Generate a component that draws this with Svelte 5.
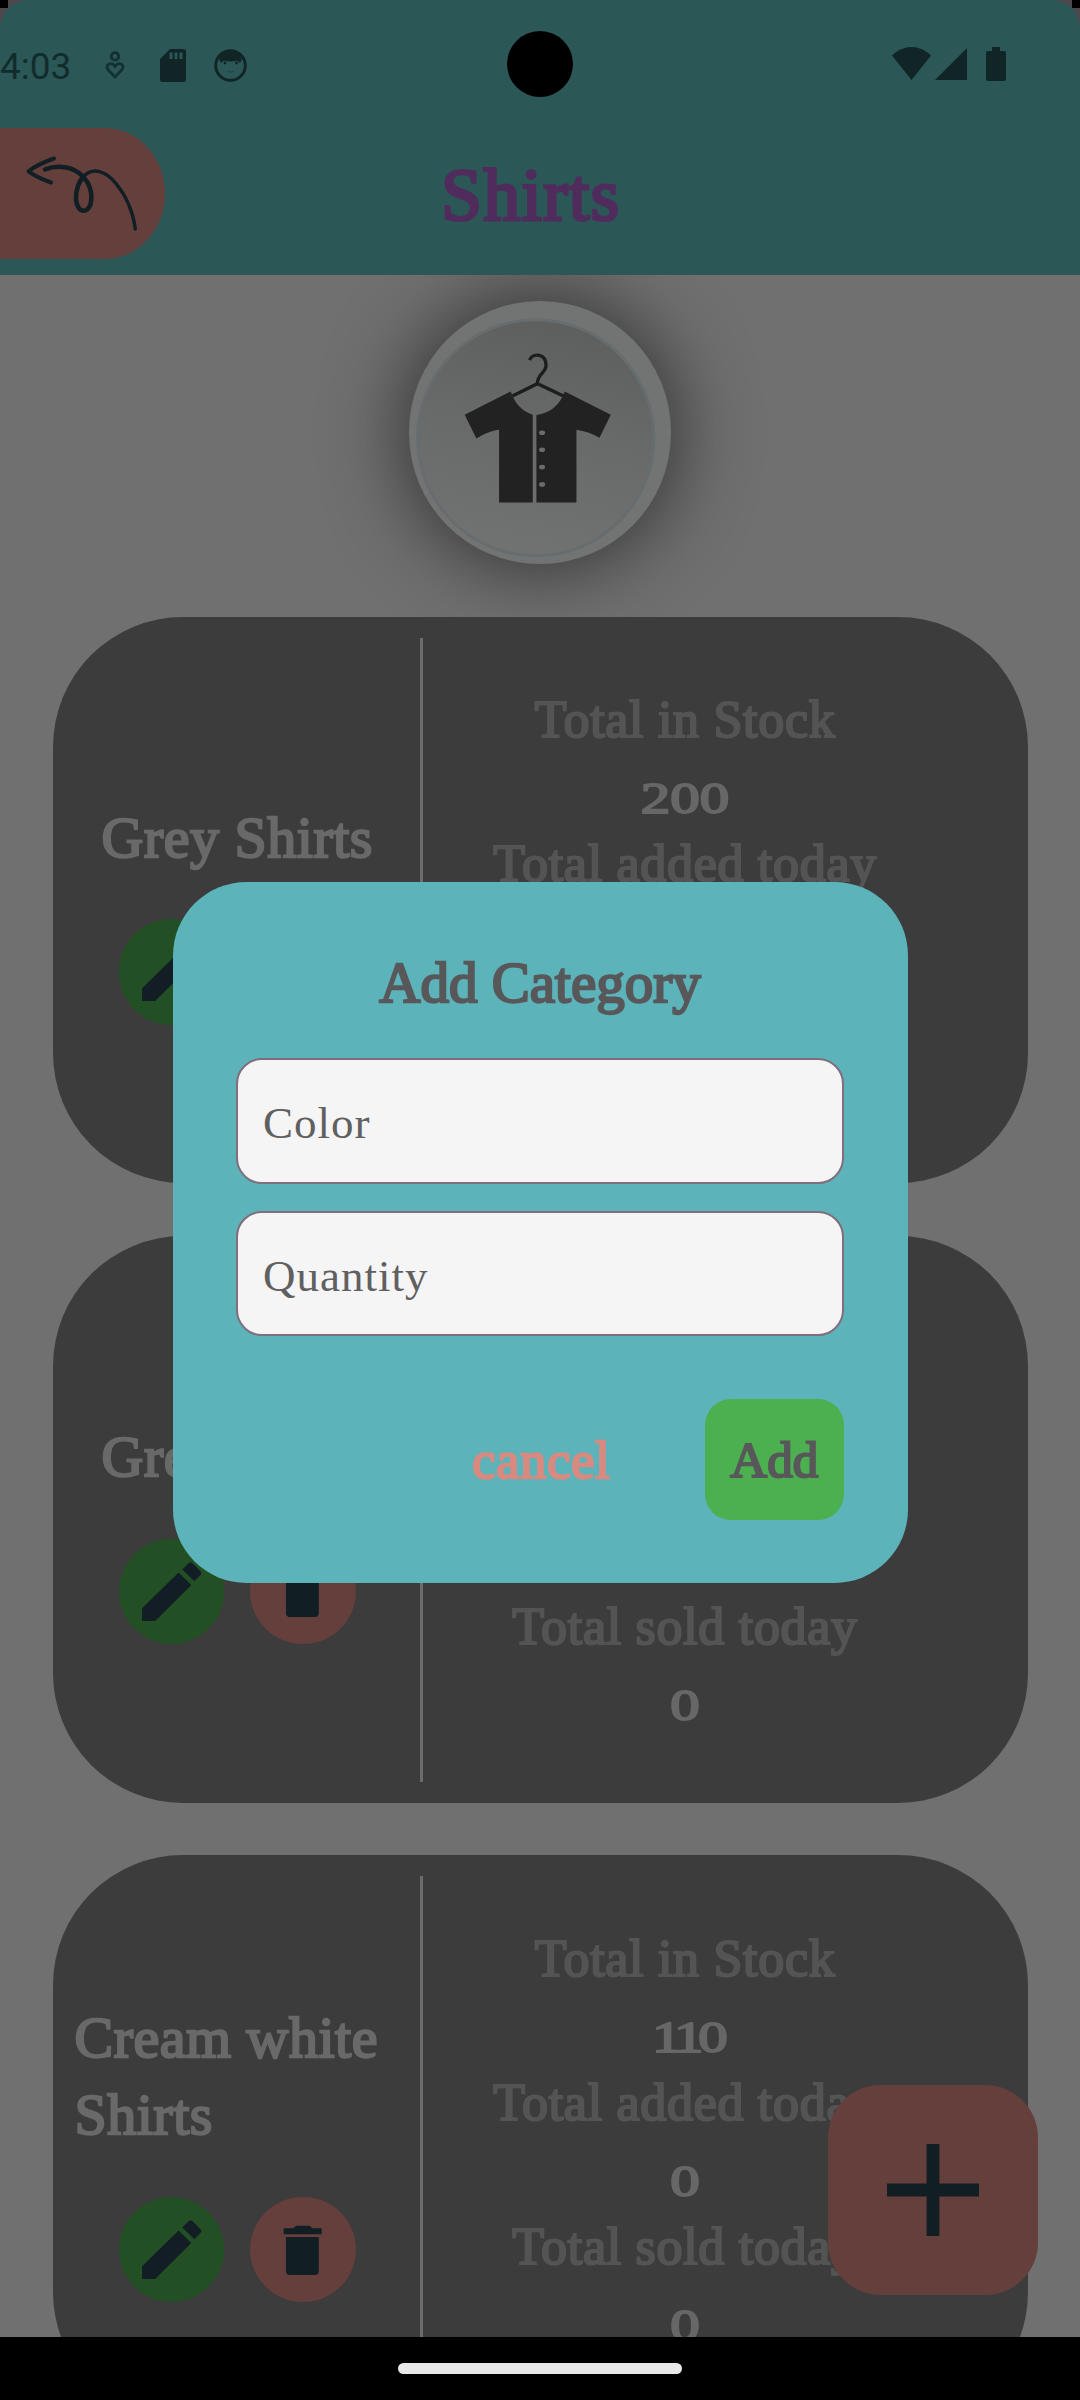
<script>
  const categories = [
    { name: 'Grey Shirts', stock: 200, added: 0, sold: 0 },
    { name: 'Grey Shirts', stock: 200, added: 0, sold: 0 },
    { name: 'Cream white Shirts', stock: 110, added: 0, sold: 0 }
  ];
  const fields = ['Color', 'Quantity'];
</script>

{#snippet stat(label, value)}
  <div class="label">{label}</div>
  <div class="value"><span class:tight={String(value).includes('11')}>{value}</span></div>
{/snippet}

<div class="screen">
  <header>
    <div class="status">
      <span class="clock">4:03</span>
      <svg class="wellbeing" viewBox="0 0 20 28" fill="none" stroke="currentColor" stroke-width="2.8">
        <circle cx="10" cy="5.4" r="3.7" />
        <path d="M10 26 3 18.6C-.5 14 6 10 10 15.400C14 10 20.500 14 17 18.600Z" />
      </svg>
      <svg class="sdcard" viewBox="0 0 26 33">
        <path fill="currentColor" fill-rule="evenodd" d="M10 0H23.500Q26 0 26 2.500V30.500Q26 33 23.500 33H2.500Q0 33 0 30.500V10ZM9.500 3.500V10H12.500V3.500ZM14.500 3.500V10H17.500V3.500ZM19.500 3.500V10H22.500V3.500Z" />
      </svg>
      <svg class="face" viewBox="0 0 33 33">
        <circle cx="16.500" cy="16.500" r="14.800" fill="none" stroke="currentColor" stroke-width="2.900" />
        <path fill="currentColor" d="M5 10Q9 2 16.500 2T28 10L26 14 23 11.500Q16.500 13.500 10 11.500L7 14Z" />
        <circle cx="11" cy="14" r="1.400" fill="currentColor" />
        <circle cx="22.500" cy="14" r="1.400" fill="currentColor" />
        <path d="M14 22.500Q17 24 19.500 22.300" fill="none" stroke="currentColor" stroke-width=".8" opacity=".6" />
      </svg>
      <div class="camera"></div>
      <svg class="wifi" viewBox="0 0 39 33"><path fill="currentColor" d="M0 8.500Q8.500 0 19.500 0T39 8.500L19.500 33Z" /></svg>
      <svg class="signal" viewBox="0 0 32 32"><path fill="currentColor" d="M32 0V32H0Z" /></svg>
      <svg class="battery" viewBox="0 0 20 34"><path fill="currentColor" d="M6 0H14V4H18Q20 4 20 6V32Q20 34 18 34H2Q0 34 0 32V6Q0 4 2 4H6Z" /></svg>
    </div>
    <div class="appbar">
      <div class="back">
        <svg viewBox="0 0 165 131" fill="none" stroke="#111f24" stroke-linecap="round" stroke-linejoin="round">
          <path stroke-width="4" d="M54 30.500Q38 36 28.500 43.300Q37 49.500 51 54.500" />
          <path stroke-width="4.600" d="M45 41.300C58 36.500 73 38.500 83 48.500C89 55 92 64 91.300 72C90 86.500 77 86.500 76 71C75.700 62 79 53 83.500 48.500" />
          <path stroke-width="3.400" d="M83.500 48.500C93 38.500 106 43 116 55.500C127 69 133 83 135.300 101" />
        </svg>
      </div>
      <h1>Shirts</h1>
    </div>
    <i class="corner left"></i>
    <i class="corner right"></i>
  </header>

  <main>
    <div class="hero">
      <div class="avatar">
        <svg viewBox="207 93 787 787">
          <defs>
            <linearGradient id="disc" x1=".6" y1="0" x2=".4" y2="1">
              <stop offset="0" stop-color="#5d5f5f" />
              <stop offset=".45" stop-color="#686969" />
              <stop offset="1" stop-color="#717272" />
            </linearGradient>
          </defs>
          <circle cx="587" cy="503" r="354" fill="url(#disc)" stroke="#676d6e" stroke-width="9" />
          <path d="M568 270C580 245 619 252 618 287C616 312 590 312 592 342M517 378 592 341 670 378" fill="none" stroke="#1d1d1d" stroke-width="10" />
          <path fill="#222" d="M374 434 512 364Q530 418 578 434V697H477V478Q438 485 409 505ZM812 434 674 364Q652 425 589 435V697H709V479Q745 484 778 503Z" />
          <g fill="#6c6c6c">
            <ellipse cx="606" cy="488" rx="9" ry="7" /><ellipse cx="606" cy="539" rx="9" ry="7" />
            <ellipse cx="606" cy="591" rx="9" ry="7" /><ellipse cx="606" cy="643" rx="9" ry="7" />
          </g>
        </svg>
      </div>
    </div>

    {#each categories as item}
      <section class="card">
        <div class="summary">
          <h2>{item.name}</h2>
          <div class="tools">
            <div class="tool edit">
              <svg viewBox="0 0 105 105" fill="#121d25"><path d="M59.300 33.300 75 48 36 81.700H23V69Z" fill="none" /><path d="M59.300 33.300 72 45.700 36 81.700H23V69ZM63 30.300 69.500 24Q71.300 22.500 73 24L81.300 32.300Q82.800 34 81.300 35.600L75 42Z" /></svg>
            </div>
            <div class="tool remove">
              <svg viewBox="0 0 105 105" fill="#111f25"><path d="M33.500 31H43L46 28.700H59.500L62 31H71.300V37H33.500ZM35.800 39.700H68.500V73.700Q68.500 77.700 64.500 77.700H39.800Q35.800 77.700 35.800 73.700Z" /></svg>
            </div>
          </div>
        </div>
        <div class="divider"></div>
        <div class="stats">
          {@render stat('Total in Stock', item.stock)}
          {@render stat('Total added today', item.added)}
          {@render stat('Total sold today', item.sold)}
        </div>
      </section>
    {/each}
  </main>

  <div class="navbar"><div class="pill"></div></div>

  <div class="fab">
    <svg viewBox="0 0 92 92"><path d="M46 0V92M0 46H92" stroke="#111f24" stroke-width="12.800" /></svg>
  </div>

  <div class="dialog">
    <h3>Add Category</h3>
    <div class="fields">
      {#each fields as field}
        <div class="field">{field}</div>
      {/each}
    </div>
    <div class="actions">
      <span class="cancel">cancel</span>
      <span class="add">Add</span>
    </div>
  </div>
</div>

<style>
  :global(body) { background: #000; }
  .screen {
    position: relative;
    display: grid;
    grid-template-rows: 275px 2062px 63px;
    width: 1080px;
    height: 2400px;
    overflow: hidden;
    background: #707070;
    font-family: 'Liberation Serif', 'Times New Roman', serif;
  }
  .screen * { box-sizing: border-box; }
  svg { display: block; flex: none; }
  h1, h2, h3 { margin: 0; font-weight: 400; }

  header { position: relative; z-index: 1; background: #2b5856; }
  .status {
    position: relative;
    display: flex;
    align-items: center;
    height: 130px;
    margin-bottom: -2px;
    color: #112527;
  }
  .clock {
    width: 105px;
    font: 37px/44px Roboto, sans-serif;
    padding-top: 3px;
    color: #122c2e;
  }
  .wellbeing { width: 20px; height: 28px; color: #133032; }
  .sdcard { width: 26px; height: 33px; margin-left: 35px; }
  .face { width: 33px; height: 33px; margin-left: 28px; }
  .camera {
    position: absolute;
    left: 507px;
    top: 31px;
    width: 66px;
    height: 66px;
    border-radius: 50%;
    background: #000;
  }
  .wifi { width: 39px; height: 33px; margin-left: auto; margin-top: -4px; }
  .signal { width: 32px; height: 32px; margin: -2px 0 0 4px; }
  .battery { width: 20px; height: 34px; margin: -2px 74px 0 19px; }
  .appbar { display: flex; align-items: center; height: 131px; }
  .back {
    width: 165px;
    height: 131px;
    border-radius: 0 60px 60px 0 / 0 65.5px 65.5px 0;
    background: #643f3b;
  }
  h1 {
    flex: 1;
    padding: 4px 183px 0 0;
    text-align: center;
    font-size: 73px;
    line-height: 81px;
    letter-spacing: 1.500px;
    color: #4f2c5c;
    -webkit-text-stroke: 3.200px #4f2c5c;
  }
  .corner { position: absolute; top: 0; width: 28px; height: 28px; }
  .left { left: 0; background: linear-gradient(#000, #000) 0 0 / 8px 8px no-repeat, radial-gradient(circle at 100% 100%, transparent 27.500px, #4d484c 28px); }
  .right { right: 0; background: linear-gradient(#000, #000) 100% 0 / 8px 8px no-repeat, radial-gradient(circle at 0 100%, transparent 27.500px, #4d484c 28px); }

  main { overflow: hidden; }
  .hero { display: flex; justify-content: center; height: 341.500px; padding-top: 26px; }
  .avatar {
    width: 262.500px;
    height: 262.500px;
    border-radius: 50%;
    background: #727373;
    box-shadow: 0 0 75px 8px rgba(40, 40, 40, .8);
    overflow: hidden;
  }
  .card {
    position: relative;
    display: flex;
    width: 975px;
    height: 566.900px;
    margin: 0 auto 52.500px;
    padding: 21px 80px 21px 0;
    border-radius: 130px;
    background: #3c3c3c;
  }
  .summary {
    display: flex;
    flex-direction: column;
    align-items: center;
    justify-content: center;
    width: 367.500px;
    padding: 24px 20px 0 22px;
  }
  h2 {
    font-size: 58px;
    line-height: 77px;
    letter-spacing: .5px;
    color: #696969;
    -webkit-text-stroke: 2.300px #696969;
  }
  .tools { display: flex; gap: 26px; margin-top: 43.500px; }
  .tool { width: 105.500px; height: 105.500px; border-radius: 50%; }
  .edit { background: #225024; }
  .remove { background: #643f3b; }
  .divider { width: 2.600px; background: #6c6c6c; }
  .stats {
    flex: 1;
    display: flex;
    flex-direction: column;
    justify-content: center;
    padding-top: 4px;
    text-align: center;
  }
  .label {
    font-size: 52px;
    line-height: 67px;
    letter-spacing: .7px;
    color: #545454;
    -webkit-text-stroke: 2.200px #545454;
  }
  .value {
    padding-top: 14px;
    font-size: 44px;
    line-height: 63px;
    color: #676767;
    -webkit-text-stroke: 1.900px #676767;
  }
  .value span { display: inline-block; transform: scaleX(1.340); }
  .value .tight { letter-spacing: -4px; padding-right: 0; margin-right: -4px; }

  .navbar {
    position: relative;
    z-index: 3;
    display: flex;
    justify-content: center;
    padding-top: 26px;
    background: #000;
  }
  .pill { width: 284px; height: 11px; border-radius: 6px; background: #e8e8e8; }

  .fab {
    position: absolute;
    left: 828px;
    top: 2084.500px;
    display: grid;
    place-items: center;
    width: 210px;
    height: 210px;
    border-radius: 52.500px;
    background: #643f3b;
  }
  .fab svg { width: 92px; height: 92px; }

  .dialog {
    position: absolute;
    left: 172.500px;
    top: 882px;
    width: 735px;
    height: 700.500px;
    padding: 63px 63.500px 0;
    border-radius: 73.500px;
    background: #5cb3b9;
  }
  h3 {
    text-align: center;
    font-size: 57px;
    line-height: 76px;
    color: #58585a;
    -webkit-text-stroke: 2.300px #58585a;
  }
  .fields { display: flex; flex-direction: column; gap: 27px; margin-top: 37px; }
  .field {
    display: flex;
    align-items: center;
    height: 125.500px;
    padding: 5px 25px 0;
    border: 2px solid #806e7d;
    border-radius: 26px;
    background: #f5f5f5;
    font-size: 45px;
    letter-spacing: 1px;
    color: #606060;
  }
  .actions {
    display: flex;
    align-items: center;
    justify-content: flex-end;
    gap: 94px;
    height: 120.500px;
    margin-top: 63px;
    font-size: 52px;
  }
  .cancel {
    padding-top: 2px;
    letter-spacing: .9px;
    color: #d98a80;
    -webkit-text-stroke: 2.400px #d98a80;
  }
  .add {
    display: grid;
    place-items: center;
    width: 139.500px;
    height: 100%;
    padding-top: 2px;
    border-radius: 26px;
    background: #4caf50;
    color: #58585a;
    font-size: 51px;
    -webkit-text-stroke: 2.200px #58585a;
  }
</style>
